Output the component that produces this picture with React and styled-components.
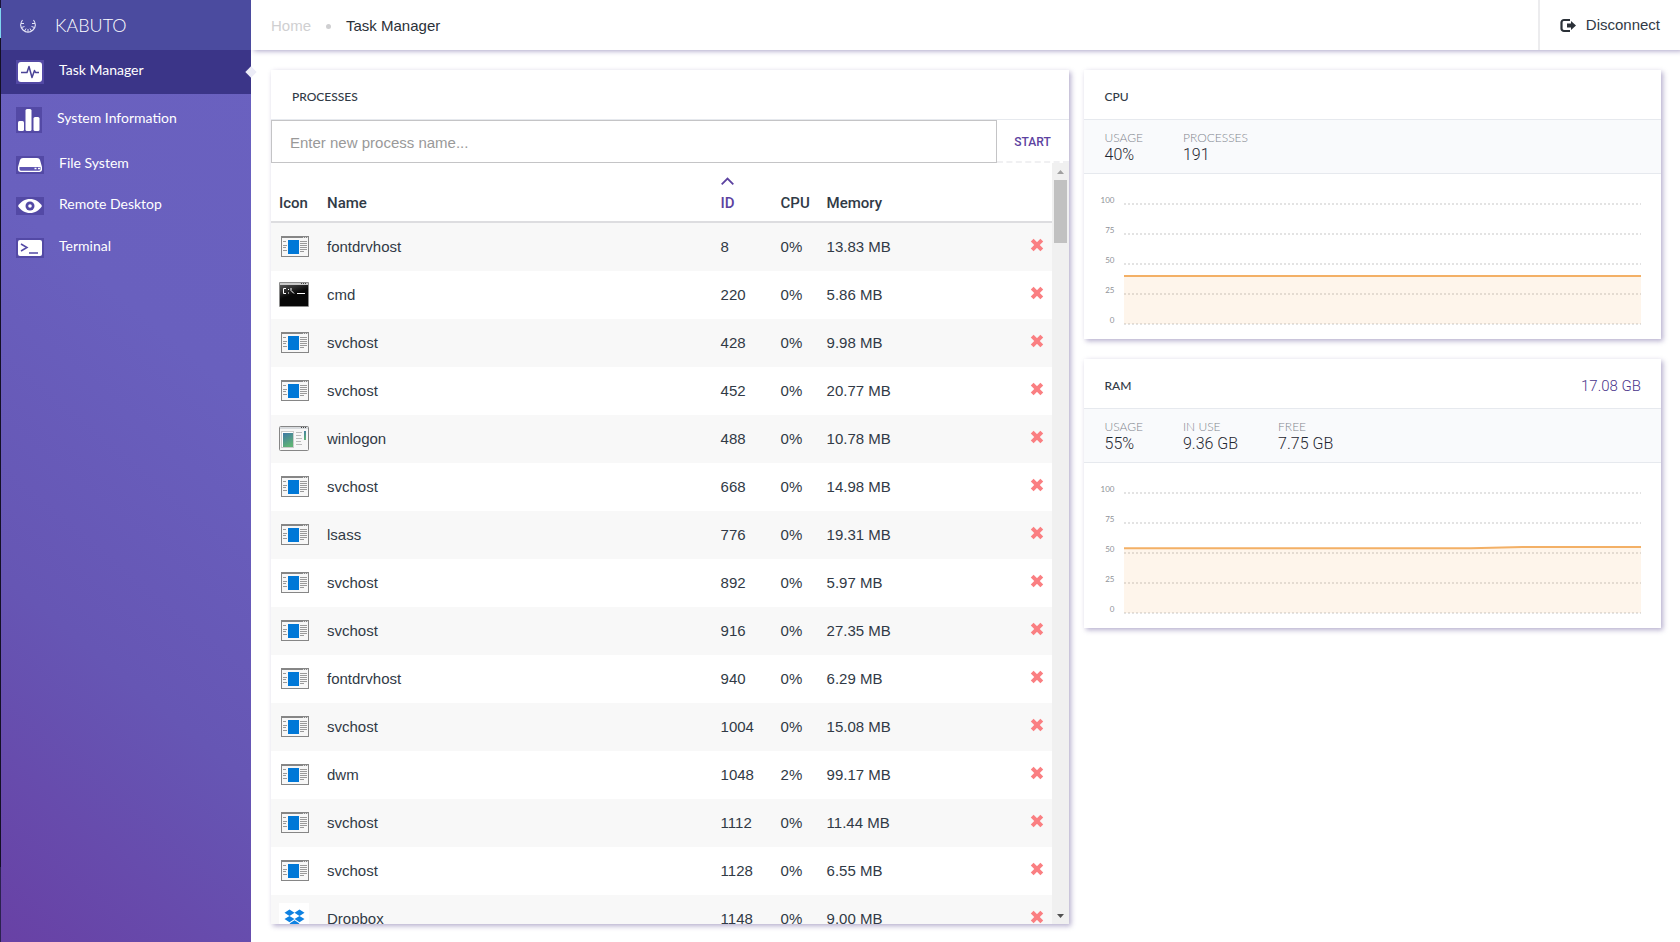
import { useState } from 'react';
import styled, { createGlobalStyle } from 'styled-components';

const GlobalStyle = createGlobalStyle`
  * {
    box-sizing: border-box;
  }
  body {
    margin: 0;
    background: #fff;
    color: #313a46;
    font-family: 'Liberation Sans', Arial, sans-serif;
    font-size: 15px;
    line-height: 20px;
  }
  button, input {
    font: inherit;
    color: inherit;
  }
  button {
    background: none;
    border: 0;
    padding: 0;
    cursor: pointer;
  }
`;

const Shell = styled.div`
  display: grid;
  grid-template-columns: 250px minmax(0, 1fr);
  height: 100vh;
  padding-left: 1px;
  background: linear-gradient(#1a1438 8px, #7fd6f0 8px, #7fd6f0 38px, #141026 38px, #141026 867px, #2c2250 867px) left / 1px 100% no-repeat;
`;

const Sidebar = styled.aside`
  position: relative;
  z-index: 2;
  background: linear-gradient(40deg, #6841a5 0%, #6656b4 32%, #6960be 65%, #6a61c0 100%);
  color: #fff;
  font-family: Lato, sans-serif;
`;

const Brand = styled.div`
  display: flex;
  align-items: center;
  gap: 18px;
  height: 50px;
  padding: 0 18px;
  background: #4b4b9f;
  font-size: 18px;
  font-weight: 300;
`;

const Nav = styled.nav`
  display: flex;
  flex-direction: column;
  gap: 3px;
`;

const NavLink = styled.a`
  position: relative;
  display: flex;
  align-items: center;
  gap: 15px;
  padding: 10px 15px;
  color: #fff;
  font-size: 14px;
  line-height: 14px;
  text-decoration: none;
  background: ${(p) => (p.$active ? '#3b3588' : 'transparent')};

  svg {
    display: block;
    flex: none;
    background: #5349a5;
  }

  span {
    padding-bottom: 4px;
  }

  &::after {
    content: '';
    display: ${(p) => (p.$active ? 'block' : 'none')};
    position: absolute;
    top: 18px;
    right: -4px;
    width: 8px;
    height: 8px;
    background: #ececf7;
    transform: rotate(45deg);
  }
`;

const Main = styled.div`
  display: flex;
  flex-direction: column;
  min-width: 0;
  height: 100vh;
`;

const TopBar = styled.header`
  display: flex;
  align-items: stretch;
  justify-content: space-between;
  height: 50px;
  flex: none;
  padding-left: 20px;
  box-shadow: 3px 1px 5px rgba(69, 52, 130, 0.45);
`;

const Crumbs = styled.nav`
  display: flex;
  align-items: center;
  gap: 15px;
  padding-top: 2px;
  color: #2b3138;

  a {
    color: #cfcfd1;
    text-decoration: none;
  }
`;

const Dot = styled.span`
  width: 5px;
  height: 5px;
  border-radius: 50%;
  background: #cfcfd1;
`;

const Disconnect = styled.button`
  display: flex;
  align-items: center;
  gap: 9px;
  padding: 0 20px;
  border-left: 2px solid #ececee;
`;

const Content = styled.main`
  display: grid;
  grid-template-columns: minmax(0, 58fr) minmax(0, 42fr);
  gap: 15px;
  flex: 1;
  min-height: 0;
  padding: 20px 19px 18px 20px;
`;

const Column = styled.div`
  display: flex;
  flex-direction: column;
  gap: 20px;
`;

const Card = styled.section`
  display: flex;
  flex-direction: column;
  min-height: 0;
  background: #fff;
  box-shadow: 2px 2px 5px rgba(69, 52, 130, 0.4);
`;

const CardHeader = styled.header`
  display: flex;
  align-items: center;
  justify-content: space-between;
  flex: none;
  height: 50px;
  padding: 4px 20px 0 21px;
  border-bottom: 1px solid #e6e9ee;

  h2 {
    margin: 0;
    font-family: Lato, sans-serif;
    font-size: 12px;
    font-weight: 500;
  }
`;

const Total = styled.span`
  font-family: Roboto, sans-serif;
  font-size: 15px;
  font-weight: 300;
  color: #4a358c;
`;

const StartForm = styled.form`
  display: flex;
  flex: none;
  height: 43px;
`;

const ProcessInput = styled.input`
  flex: 1;
  min-width: 0;
  padding: 2px 18px 0;
  border: 1px solid #c4c4c6;
  background: #fff;

  &::placeholder {
    color: #999;
    opacity: 1;
  }
`;

const StartButton = styled.button`
  width: 72px;
  padding-top: 2px;
  border-bottom: 2px dashed #f0f0f2;
  color: #5c42a0;
  font-family: Roboto, sans-serif;
  font-size: 12px;
  font-weight: 500;
`;

const ScrollArea = styled.div`
  display: flex;
  flex: 1;
  min-height: 0;
`;

const Viewport = styled.div`
  flex: 1;
  min-width: 0;
  overflow: hidden;
`;

const ScrollTrack = styled.div`
  display: flex;
  flex-direction: column;
  align-items: center;
  justify-content: space-between;
  width: 17px;
  background: #f0f0f0;
`;

const ScrollTop = styled.div`
  display: flex;
  flex-direction: column;
  align-items: center;
`;

const ScrollButton = styled.button`
  display: flex;
  align-items: center;
  justify-content: center;
  width: 17px;
  height: 17px;
`;

const ScrollThumb = styled.div`
  width: 13px;
  height: 63px;
  background: #c1c1c1;
`;

const Table = styled.table`
  width: 100%;
  table-layout: fixed;
  border-collapse: separate;
  border-spacing: 0;
`;

const Th = styled.th`
  width: ${(p) => p.$width};
  height: 60px;
  padding: 8px;
  border-bottom: 2px solid #dddde0;
  vertical-align: bottom;
  text-align: left;
  white-space: nowrap;
  font-family: Roboto, sans-serif;
  font-weight: 500;
`;

const SortButton = styled.button`
  display: flex;
  flex-direction: column;
  align-items: flex-start;
  gap: 8px;
  color: #5c42a0;
`;

const Row = styled.tr`
  height: 48px;

  &:nth-child(odd) {
    background: #f8f8f8;
  }
`;

const Td = styled.td`
  height: 48px;
  padding: 0 8px;
  vertical-align: middle;
  white-space: nowrap;

  svg {
    display: block;
  }
`;

const Stats = styled.dl`
  display: flex;
  gap: 40px;
  height: 54px;
  margin: 0;
  padding: 10px 21px;
  border-bottom: 1px solid #e6e9ee;
  background: #f9fafc;
  font-weight: 300;

  dt {
    color: #82868f;
    font-family: Lato, sans-serif;
    font-size: 12px;
    line-height: 16px;
  }
  dd {
    margin: 0;
    color: #1f2630;
    font-family: Roboto, sans-serif;
    font-size: 16px;
    line-height: 18px;
  }
`;

const ChartBox = styled.div`
  display: flex;
  gap: 9px;
  padding: 21px 20px 11px 0;
`;

const Axis = styled.div`
  display: flex;
  flex-direction: column;
  align-items: flex-end;
  gap: 20px;
  width: 31px;
  color: #8f9298;
  font-family: Lato, sans-serif;
  font-size: 8px;
  line-height: 10px;
`;

const Plot = styled.svg`
  display: block;
  flex: 1;
  min-width: 0;
  height: 133px;
`;

function Logo() {
  return (
    <svg width="18" height="18" viewBox="0 0 18 18" fill="none" stroke="#e4e4f6">
      <path d="M3.500 4C1 7.500 1.500 11.500 4 14c3 3 7 3 10 0 2.500-2.500 3-6.500.5-10" strokeWidth="1.100" />
      <path d="M2 7.500h3M16 7.500h-3M2.500 11.500l3-1M15.500 11.500l-3-1M5.500 15l1.500-2.500M12.500 15L11 12.500M9 16v-3" strokeWidth="1" />
    </svg>
  );
}

function ActivityIcon() {
  return (
    <svg width="28" height="24" viewBox="0 0 28 24">
      <rect x="2" y="2" width="24" height="20" rx="3" fill="#fff" />
      <path d="M5 12.500h6l2-6 3 11 2.500-7 1 2H23" fill="none" stroke="#4b4497" strokeWidth="1.500" strokeLinejoin="round" />
    </svg>
  );
}

function BarsIcon() {
  return (
    <svg width="26" height="26" viewBox="0 0 26 26" fill="#fff">
      <rect x="2" y="14" width="6" height="10" rx="1.500" />
      <rect x="9.500" y="2" width="6" height="22" rx="1.500" />
      <rect x="17.500" y="10" width="6" height="14" rx="1.500" />
    </svg>
  );
}

function DriveIcon() {
  return (
    <svg width="28" height="18" viewBox="0 0 28 18">
      <path d="M7 2h14c1.500 0 2.500.8 3 2l2 7v2.500c0 1.500-1 2.500-2.500 2.500h-19C3 16 2 15 2 13.500V11l2-7c.5-1.200 1.500-2 3-2z" fill="#fff" />
      <path d="M3.500 11h21v2c0 1-.5 1.700-1.500 1.700H5c-1 0-1.500-.7-1.500-1.700z" fill="#5f56b2" />
      <path d="M18.500 12.500h2M22 12.500h2" stroke="#fff" strokeWidth="1.400" />
    </svg>
  );
}

function EyeIcon() {
  return (
    <svg width="28" height="18" viewBox="0 0 28 18">
      <path d="M2 9c3-4.700 7-7 12-7s9 2.300 12 7c-3 4.700-7 7-12 7S5 13.700 2 9z" fill="#fff" />
      <circle cx="14" cy="9" r="4.500" fill="#5349a5" />
      <circle cx="14" cy="9" r="1.800" fill="#fff" />
    </svg>
  );
}

function TerminalIcon() {
  return (
    <svg width="28" height="20" viewBox="0 0 28 20">
      <rect x="2" y="2" width="24" height="16" rx="2" fill="#fff" />
      <path d="M5 6l6 3.500L5 13M13 15h9" fill="none" stroke="#5349a5" strokeWidth="1.500" />
    </svg>
  );
}

function LogOutIcon() {
  return (
    <svg width="17" height="15" viewBox="0 0 17 15">
      <path d="M10 2H4a2.500 2.500 0 0 0-2.500 2.500v6A2.500 2.500 0 0 0 4 13h6" fill="none" stroke="#2b3138" strokeWidth="2.200" />
      <path d="M7 5.500h4V3l5 4.500-5 4.500V9.500H7z" fill="#2b3138" />
    </svg>
  );
}

function CloseIcon() {
  return (
    <svg width="14" height="14" viewBox="0 0 14 14">
      <path d="M2.200 2.200l9.600 9.600M11.800 2.200l-9.600 9.600" stroke="#fa7f82" strokeWidth="4" />
    </svg>
  );
}

function HostIcon() {
  return (
    <svg width="32" height="32" viewBox="0 0 32 32" shapeRendering="crispEdges">
      <rect x="2" y="5" width="28" height="21" fill="#868686" />
      <rect x="3" y="7" width="26" height="18" fill="#f7f7f7" />
      <path d="M24 6h1M26 6h1M28 6h1" transform="translate(0 .5)" stroke="#ddd" />
      <rect x="9" y="9" width="11" height="14" fill="#0078d7" />
      <path d="M4 10.500h3M4 14.500h4M4 16.500h3M4 19.500h4M21 10.500h7M21 12.500h7M21 14.500h7M21 16.500h7M21 18.500h7M21 20.500h4" stroke="#999" />
    </svg>
  );
}

function CmdIcon() {
  return (
    <svg width="32" height="32" viewBox="0 0 32 32">
      <defs>
        <linearGradient id="cmdShine" x1="0" y1="0" x2=".5" y2="1">
          <stop offset="0" stopColor="#565656" />
          <stop offset=".55" stopColor="#080808" />
        </linearGradient>
      </defs>
      <rect x="0" y="3" width="30" height="25" rx="1" fill="#8c8c8c" />
      <rect x="1" y="4" width="28" height="2" fill="#c9c9c9" />
      <path d="M22 4.500h1M24 4.500h1M26 4.500h1" stroke="#444" />
      <rect x="1" y="6" width="28" height="21" fill="url(#cmdShine)" />
      <path d="M7 9.500H4.500v5H7M9.500 10v1M9.500 13.500v1M12 9v2.500l3 3M18 14.500h8" fill="none" stroke="#fff" />
    </svg>
  );
}

function WinlogonIcon() {
  return (
    <svg width="32" height="32" viewBox="0 0 32 32">
      <defs>
        <linearGradient id="logonFill" x1="0" y1="0" x2=".4" y2="1">
          <stop offset="0" stopColor="#3f78a6" />
          <stop offset="1" stopColor="#5fb276" />
        </linearGradient>
      </defs>
      <rect x="0.500" y="3.500" width="29" height="24" rx="1" fill="#f7f7f7" stroke="#868686" />
      <path d="M1 5h28" stroke="#b9bfc5" />
      <path d="M22 4.500h1M24 4.500h1M26 4.500h1" stroke="#444" />
      <rect x="2.500" y="8.500" width="12" height="16" fill="#fff" stroke="#ccc" />
      <rect x="4" y="10" width="10" height="14" fill="url(#logonFill)" />
      <path d="M17 9.500h6M17 12.500h5M17 15.500h6M17 18.500h5M17 21.500h6" stroke="#bbb" />
      <rect x="25" y="8" width="2" height="9" fill="url(#logonFill)" />
    </svg>
  );
}

function DropboxIcon() {
  return (
    <svg width="32" height="32" viewBox="0 0 32 32">
      <rect width="30" height="32" fill="#fff" />
      <path
        d="M10.500 6.500L15.500 9.700l-5 3.200-5-3.200zM20.500 6.500l5 3.200-5 3.200-5-3.200zM10.500 12.900l5 3.200-5 3.200-5-3.200zM20.500 12.900l5 3.200-5 3.200-5-3.200zM15.500 17.200l5 3.200-5 3.200-5-3.200z"
        fill="#0f82e2"
      />
    </svg>
  );
}

const icons = {
  cmd: CmdIcon,
  winlogon: WinlogonIcon,
  Dropbox: DropboxIcon,
};

const links = [
  { label: 'Task Manager', icon: ActivityIcon },
  { label: 'System Information', icon: BarsIcon },
  { label: 'File System', icon: DriveIcon },
  { label: 'Remote Desktop', icon: EyeIcon },
  { label: 'Terminal', icon: TerminalIcon },
];

const initialProcesses = [
  { name: 'fontdrvhost', id: 8, cpu: 0, memory: '13.83 MB' },
  { name: 'cmd', id: 220, cpu: 0, memory: '5.86 MB' },
  { name: 'svchost', id: 428, cpu: 0, memory: '9.98 MB' },
  { name: 'svchost', id: 452, cpu: 0, memory: '20.77 MB' },
  { name: 'winlogon', id: 488, cpu: 0, memory: '10.78 MB' },
  { name: 'svchost', id: 668, cpu: 0, memory: '14.98 MB' },
  { name: 'lsass', id: 776, cpu: 0, memory: '19.31 MB' },
  { name: 'svchost', id: 892, cpu: 0, memory: '5.97 MB' },
  { name: 'svchost', id: 916, cpu: 0, memory: '27.35 MB' },
  { name: 'fontdrvhost', id: 940, cpu: 0, memory: '6.29 MB' },
  { name: 'svchost', id: 1004, cpu: 0, memory: '15.08 MB' },
  { name: 'dwm', id: 1048, cpu: 2, memory: '99.17 MB' },
  { name: 'svchost', id: 1112, cpu: 0, memory: '11.44 MB' },
  { name: 'svchost', id: 1128, cpu: 0, memory: '6.55 MB' },
  { name: 'Dropbox', id: 1148, cpu: 0, memory: '9.00 MB' },
];

const ticks = [100, 75, 50, 25, 0];

// points are [x in percent of the plot width, value 0-100]
function Chart({ label, points }) {
  const y = (value) => 129 - value * 1.2;
  const line = points.map(([x, value]) => `${x},${y(value)}`).join(' ');
  return (
    <ChartBox>
      <Axis>
        {ticks.map((tick) => (
          <span key={tick}>{tick}</span>
        ))}
      </Axis>
      <Plot viewBox="0 0 100 133" preserveAspectRatio="none" role="img" aria-label={label}>
        {ticks.map((tick) => (
          <path
            key={tick}
            d={`M0 ${y(tick)}H100`}
            stroke="rgba(0, 0, 0, 0.11)"
            strokeWidth="2"
            strokeDasharray="2 2"
            vectorEffect="non-scaling-stroke"
          />
        ))}
        <polygon points={`0,129 ${line} 100,129`} fill="#f98c1f" fillOpacity="0.09" />
        <polyline points={line} fill="none" stroke="#f3b066" strokeWidth="2" vectorEffect="non-scaling-stroke" />
      </Plot>
    </ChartBox>
  );
}

function StatList({ items }) {
  return (
    <Stats>
      {items.map(([label, value]) => (
        <div key={label}>
          <dt>{label}</dt>
          <dd>{value}</dd>
        </div>
      ))}
    </Stats>
  );
}

function Processes() {
  const [processes, setProcesses] = useState(initialProcesses);
  const [name, setName] = useState('');
  const kill = (id) => setProcesses(processes.filter((p) => p.id !== id));

  return (
    <Card>
      <CardHeader>
        <h2>PROCESSES</h2>
      </CardHeader>
      <StartForm onSubmit={(e) => e.preventDefault()}>
        <ProcessInput
          aria-label="Process name"
          placeholder="Enter new process name..."
          value={name}
          onChange={(e) => setName(e.target.value)}
        />
        <StartButton type="submit">START</StartButton>
      </StartForm>
      <ScrollArea>
        <Viewport>
          <Table>
            <thead>
              <tr>
                <Th $width="48px">Icon</Th>
                <Th>Name</Th>
                <Th $width="60px">
                  <SortButton type="button">
                    <svg width="13" height="8" viewBox="0 0 13 8" fill="none" stroke="currentColor" strokeWidth="1.800">
                      <path d="M.7 7.300L6.500 1.500l5.800 5.800" />
                    </svg>
                    ID
                  </SortButton>
                </Th>
                <Th $width="46px">CPU</Th>
                <Th $width="26%">Memory</Th>
                <Th $width="30px" aria-label="Actions" />
              </tr>
            </thead>
            <tbody>
              {processes.map((p) => {
                const Icon = icons[p.name] || HostIcon;
                return (
                  <Row key={p.id}>
                    <Td>
                      <Icon />
                    </Td>
                    <Td>{p.name}</Td>
                    <Td>{p.id}</Td>
                    <Td>{p.cpu}%</Td>
                    <Td>{p.memory}</Td>
                    <Td>
                      <button type="button" aria-label={`End ${p.name}`} onClick={() => kill(p.id)}>
                        <CloseIcon />
                      </button>
                    </Td>
                  </Row>
                );
              })}
            </tbody>
          </Table>
        </Viewport>
        <ScrollTrack>
          <ScrollTop>
            <ScrollButton type="button" aria-label="Scroll up">
              <svg width="7" height="4" viewBox="0 0 7 4">
                <path d="M0 4l3.500-4L7 4z" fill="#a0a0a0" />
              </svg>
            </ScrollButton>
            <ScrollThumb />
          </ScrollTop>
          <ScrollButton type="button" aria-label="Scroll down">
            <svg width="7" height="4" viewBox="0 0 7 4">
              <path d="M0 0l3.500 4L7 0z" fill="#505050" />
            </svg>
          </ScrollButton>
        </ScrollTrack>
      </ScrollArea>
    </Card>
  );
}

export default function App() {
  return (
    <Shell>
      <GlobalStyle />
      <Sidebar>
        <Brand>
          <Logo />
          KABUTO
        </Brand>
        <Nav>
          {links.map(({ label, icon: Icon }, i) => (
            <NavLink key={label} href="#" $active={i === 0}>
              <Icon />
              <span>{label}</span>
            </NavLink>
          ))}
        </Nav>
      </Sidebar>
      <Main>
        <TopBar>
          <Crumbs>
            <a href="#">Home</a>
            <Dot />
            <span>Task Manager</span>
          </Crumbs>
          <Disconnect type="button">
            <LogOutIcon />
            Disconnect
          </Disconnect>
        </TopBar>
        <Content>
          <Processes />
          <Column>
            <Card>
              <CardHeader>
                <h2>CPU</h2>
              </CardHeader>
              <StatList
                items={[
                  ['USAGE', '40%'],
                  ['PROCESSES', '191'],
                ]}
              />
              <Chart label="CPU usage" points={[[0, 40], [100, 40]]} />
            </Card>
            <Card>
              <CardHeader>
                <h2>RAM</h2>
                <Total>17.08 GB</Total>
              </CardHeader>
              <StatList
                items={[
                  ['USAGE', '55%'],
                  ['IN USE', '9.36 GB'],
                  ['FREE', '7.75 GB'],
                ]}
              />
              <Chart label="RAM usage" points={[[0, 54], [67, 54], [77, 55], [100, 55]]} />
            </Card>
          </Column>
        </Content>
      </Main>
    </Shell>
  );
}
